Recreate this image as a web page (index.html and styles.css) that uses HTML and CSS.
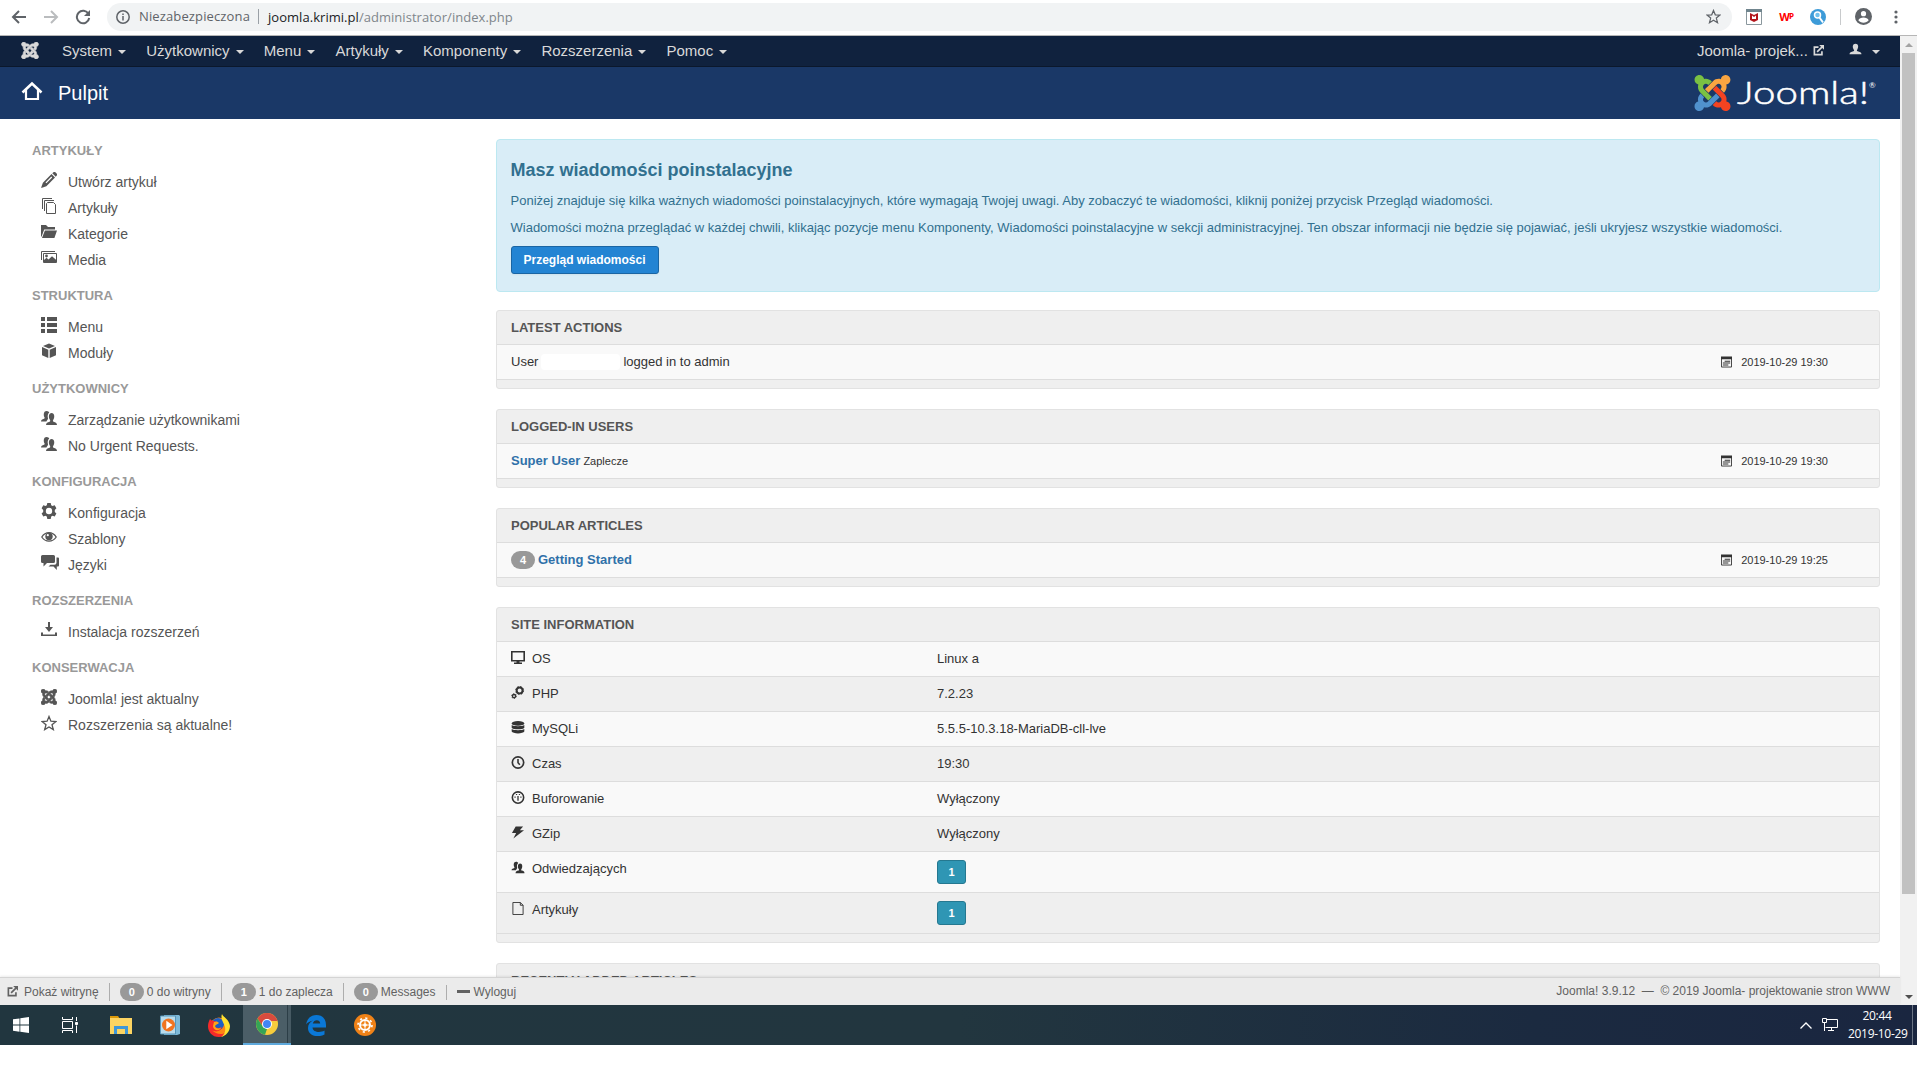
FILE: index.html
```html
<!DOCTYPE html>
<html lang="pl">
<head>
  <meta charset="UTF-8">
  <title>Pulpit - Joomla- projektowanie stron WWW - Administracja</title>
  <link rel="stylesheet" href="styles.css">
</head>
<body>
  <svg class="sprite" aria-hidden="true">
    <symbol id="i-joomla" viewBox="0 32 448 448"><path d="M.6 92.1C.6 58.8 27.4 32 60.4 32c30 0 54.5 21.9 59.2 50.2 32.6-7.6 67.1.6 96.5 30l-44.3 44.3c-20.5-20.5-42.6-16.3-55.4-3.5-14.3 14.3-14.3 37.9 0 52.2l99.5 99.5-44 44.3c-87.7-87.2-49.7-49.7-99.8-99.7-26.8-26.5-35-64.8-24.8-98.9C20.4 144.6.6 120.7.6 92.1zm129.5 116.4l44.3 44.3c10-10 89.7-89.7 99.7-99.8 14.3-14.3 37.6-14.3 51.9 0 12.8 12.8 17 35-3.5 55.4l44 44.3c31.2-31.2 38.5-67.6 28.9-101.2 29.2-4.1 51.9-29.2 51.9-59.5 0-33.2-26.8-60.1-59.8-60.1-30.3 0-55.4 22.5-59.5 51.6-33.8-9.9-71.7-1.5-98.3 25.1-18.3 19.1-71.1 71.5-99.6 99.9zm266.3 152.2c8.2-32.7-.9-68.5-26.3-93.9-11.8-12.2 5 4.7-99.5-99.7l-44.3 44.3 99.7 99.7c14.3 14.3 14.3 37.6 0 51.9-12.8 12.8-35 17-55.4-3.5l-44 44.3c27.6 30.2 68 38.8 102.7 28 5.5 27.4 29.7 48.1 58.9 48.1 33 0 59.8-26.8 59.8-60.1 0-30.2-22.5-55-51.6-59.1zm-84.3-53.1l-44-44.3c-87 86.4-50.4 50.4-99.7 99.8-14.3 14.3-37.6 14.3-51.9 0-13.1-13.4-16.9-35.3 3.2-55.4l-44-44.3c-30.2 30.2-38 65.2-29.5 98.3-26.7 6-46.2 29.9-46.2 58.2C0 453.2 26.8 480 59.8 480c28.6 0 52.5-19.8 58.6-46.7 32.7 8.2 68.5-.6 94.2-26 32.1-32 12.2-12.4 99.5-99.7z"/></symbol>
    <symbol id="i-pencil" viewBox="0 0 16 16"><path fill-rule="evenodd" d="M11.3 1.2 12.4.3a1.6 1.6 0 0 1 2.2.1l1 1a1.6 1.6 0 0 1 .1 2.2l-.9 1.1zM10.500 2l3.500 3.500-8.600 8.700L0 16l1.900-5.300zm-.2 2.600-5.800 5.800.9.900 5.800-5.800z"/></symbol>
    <symbol id="i-copy" viewBox="0 0 16 16"><g fill="none" stroke="currentColor"><path d="M6.500 4.500h6l2 2v9h-9v-10zM3.500 13V2.500h9.500M1.500 11V.5H11"/></g></symbol>
    <symbol id="i-folder" viewBox="0 0 16 16"><path d="M0 1h5l2 2h7v2.400H3.200L.8 12 0 13zM3.900 6.400H16L13.400 14H1z"/></symbol>
    <symbol id="i-pictures" viewBox="0 0 16 16"><path fill="none" stroke="currentColor" d="M.5 10V1.500H14M2.500 3.500h13v9h-13z"/><circle cx="5.500" cy="6" r="1.400"/><path d="M3 12V10l2.500-2.200 2 1.700 3.500-3.300 4 3.600V12z"/></symbol>
    <symbol id="i-list" viewBox="0 0 16 16"><path d="M0 0h4v4H0zM6 0h10v4H6zM0 6h4v4H0zM6 6h10v4H6zM0 12h4v4H0zM6 12h10v4H6z"/></symbol>
    <symbol id="i-cube" viewBox="0 0 16 16"><path d="m8 .5 6 2.400-6 2.600-6-2.600zM1 4l6.300 2.800V15L1 12.300zM15 4 8.700 6.800V15l6.300-2.700z"/></symbol>
    <symbol id="i-users" viewBox="0 0 16 16"><path d="M5.400 11.400H0c0-1.500 1.200-2.100 3-2.600.7-.3.900-.9.300-1.800C2.300 4.600 2.600.9 5.600.9c1.500 0 2.300.8 2.700 1.700-1.500 1.200-2 3.500-1.300 5.800.2.800-.9 1.700-1.600 3zM16 15H5c0-2 1.700-2.700 3.500-3.200.9-.3 1-1 .4-2C7.300 7.300 7.600 3 10.600 3s3.300 4.300 1.700 6.800c-.6 1-.5 1.700.4 2C14.400 12.300 16 13 16 15z"/></symbol>
    <symbol id="i-user" viewBox="0 0 16 16"><path d="M16 15H0c0-2.700 2.400-3.200 5.200-4 1.200-.4 1.200-1.300.4-2.500C3.600 5.500 4 1 8 1s4.400 4.500 2.400 7.500c-.8 1.200-.8 2.100.4 2.500 2.800.8 5.200 1.300 5.200 4z"/></symbol>
    <symbol id="i-cog" viewBox="0 0 16 16"><path fill-rule="evenodd" d="M6.300 0h3.400l.5 2.200 1.300.8 2.200-.7 1.700 2.900L13.800 7v2l1.600 1.600-1.700 2.900-2.200-.7-1.300.8-.5 2.400H6.300l-.5-2.400-1.300-.8-2.200.7-1.700-2.900L2.200 9V7L.6 5.200l1.700-2.900 2.200.7 1.300-.8zM8 4.800a3.200 3.200 0 1 0 0 6.400 3.200 3.200 0 0 0 0-6.400z"/></symbol>
    <symbol id="i-cogs" viewBox="1 0 15 16"><circle cx="10.500" cy="5.500" r="3.600" fill="none" stroke="currentColor" stroke-width="2.400"/><circle cx="10.500" cy="5.500" r="4.900" fill="none" stroke="currentColor" stroke-width="1.200" stroke-dasharray="2 1.850"/><circle cx="3.600" cy="12.400" r="2" fill="none" stroke="currentColor" stroke-width="1.700"/><circle cx="3.600" cy="12.400" r="3" fill="none" stroke="currentColor" stroke-width="1" stroke-dasharray="1.500 1.640"/></symbol>
    <symbol id="i-eye" viewBox="0 0 16 16"><path fill="none" stroke="currentColor" stroke-width="1.300" d="M.8 8C4.500 2.200 11.500 2.200 15.200 8 11.500 13.500 4.500 13.500.8 8z"/><circle cx="8" cy="7.500" r="3.700"/><circle cx="6.800" cy="6.200" r="1.100" fill="#fff"/></symbol>
    <symbol id="i-comments" viewBox="0 0 18 16"><path d="M1.500 0h11A1.500 1.500 0 0 1 14 1.500v5A1.500 1.500 0 0 1 12.500 8H6l-3.500 3.500V8h-1A1.500 1.500 0 0 1 0 6.500v-5A1.500 1.500 0 0 1 1.500 0z"/><path d="M15.500 2.500H17q1 0 1 1v7q0 1-1 1h-1.200V15l-3.300-3.500H7.500l2-1.700h4q2 0 2-2z"/></symbol>
    <symbol id="i-download" viewBox="0 0 16 16"><path d="M7 0h2v5h3L8 10 4 5h3zM0 10.500h2V12.500h12V10.500h2V14H0z"/></symbol>
    <symbol id="i-star" viewBox="0 0 16 16"><path fill="none" stroke="currentColor" stroke-width="1.300" d="m8 1.500 1.900 4.700 5 .3-3.900 3.200 1.300 4.900L8 11.900l-4.300 2.700L5 9.700 1.100 6.500l5-.3z"/></symbol>
    <symbol id="i-home" viewBox="0 0 22 20"><path fill="none" stroke="currentColor" stroke-width="2.600" d="m1.500 11.500 9.500-9 9.500 9"/><path fill="none" stroke="currentColor" stroke-width="2.200" d="M5 9v9h12V9"/></symbol>
    <symbol id="i-out" viewBox="0 0 16 16"><path fill="none" stroke="currentColor" stroke-width="2.400" d="M8 3H2v11h11V9M6 10l7-7"/><path d="M9 0h7v7z"/></symbol>
    <symbol id="i-calendar" viewBox="0 0 12 12"><path fill="none" stroke="currentColor" d="M.5 1.500h11v10H.5z"/><path d="M0 0h12v3H0zM4 4.500h6v1.200H4zM2 6.500h8v1.200H2zM2 8.700h6v1.200H2z"/></symbol>
    <symbol id="i-screen" viewBox="0 0 14 13"><path fill="none" stroke="currentColor" stroke-width="1.600" d="M.8.800h12.400v8.900H.8z"/><path d="M5.500 10h3v1.500H11V13H3v-1.500h2.500z"/></symbol>
    <symbol id="i-database" viewBox="0 0 14 14"><ellipse cx="7" cy="2.600" rx="6.800" ry="2.500"/><path d="M.2 4.400c2 1.700 11.600 1.700 13.600 0v2.800c-1 2.300-12.600 2.300-13.600 0zM.2 8.600c2 1.700 11.600 1.700 13.600 0v2.800c-1 2.600-12.600 2.600-13.600 0z"/></symbol>
    <symbol id="i-clock" viewBox="0 0 14 14"><g fill="none" stroke="currentColor"><circle cx="7" cy="7" r="6.100" stroke-width="1.800"/><path stroke-width="1.700" d="M7 3.300V7.300L9 9.500"/></g></symbol>
    <symbol id="i-dash" viewBox="0 0 14 14"><circle cx="7" cy="7" r="6.100" fill="none" stroke="currentColor" stroke-width="1.700"/><path d="M6.300 5.500h1.400V10.500H6.300zM3.200 6h1.300v1.200H3.200zM9.500 6h1.300v1.200H9.500zM4.800 3.300h1.300v1.100H4.800zM7.900 3.300h1.300v1.100H7.900z"/></symbol>
    <symbol id="i-flash" viewBox="0 0 14 14"><path d="M4.500.500h8L9 4.500h4.500L2 13.500l3-6H.5z"/></symbol>
    <symbol id="i-file" viewBox="0 0 14 14"><path fill="none" stroke="currentColor" d="M1.500.500h8l3 3v10h-11zM9.500.500v3h3"/></symbol>
  </svg>

  <div class="screen">
    <!-- browser toolbar -->
    <div class="toolbar">
      <svg class="nav-btn" viewBox="0 0 16 16"><path d="M15 8H2M8 2 2 8l6 6"/></svg>
      <svg class="nav-btn disabled" viewBox="0 0 16 16"><path d="M1 8h13M8 2l6 6-6 6"/></svg>
      <svg class="nav-btn" viewBox="0 0 16 16"><path d="M13.500 5A6.200 6.200 0 1 0 14.200 9"/><path class="solid" d="M15 1v6H9z"/></svg>
      <div class="address">
        <svg class="info" viewBox="0 0 14 14"><circle cx="7" cy="7" r="6.200"/><path d="M7 6v4.500M7 3.400v1.500"/></svg>
        <span class="insecure">Niezabezpieczona</span>
        <span class="url"><b>joomla.krimi.pl</b>/administrator/index.php</span>
        <svg class="fav" viewBox="0 0 16 16"><use href="#i-star"/></svg>
      </div>
      <div class="extensions">
        <svg width="16" height="16" viewBox="0 0 16 16"><path fill="#fff" stroke="#8a979d" d="M.5.500h15v15H.5z"/><path fill="#70858e" d="M0 0h16v3H0z"/><path fill="#b3151b" d="m4 4 4 2 4-2v7l-4 2-4-2z"/><path fill="#fff" d="M6 6.500 8 8l2-1.500V10H6z"/></svg>
        <span class="wp">W<small>P</small></span>
        <svg width="16" height="16" viewBox="0 0 16 16"><circle cx="8" cy="8" r="8" fill="#3d9bd8"/><circle cx="7.500" cy="6" r="3" fill="#6fc0ec" stroke="#fff" stroke-width="1.500"/><path stroke="#fff" stroke-width="2" d="m9.500 8.500 3.500 5"/></svg>
        <i class="bar"></i>
        <svg width="17" height="17" viewBox="0 0 17 17"><circle cx="8.500" cy="8.500" r="8.500" fill="#5f6368"/><circle cx="8.500" cy="5.700" r="2.600" fill="#fff"/><path fill="#fff" d="M3.300 12.200c1.400-3.600 9-3.600 10.400 0-2.200 3.300-8.200 3.300-10.400 0z"/></svg>
        <svg width="4" height="14" viewBox="0 0 4 14" fill="#5f6368"><circle cx="2" cy="2" r="1.600"/><circle cx="2" cy="7" r="1.600"/><circle cx="2" cy="12" r="1.600"/></svg>
      </div>
    </div>

    <div class="viewport">
      <div class="page">
        <nav class="navbar">
          <svg class="brand"><use href="#i-joomla"/></svg>
          <a>System</a><a>Użytkownicy</a><a>Menu</a><a>Artykuły</a><a>Komponenty</a><a>Rozszerzenia</a><a>Pomoc</a>
          <span class="site">Joomla- projek... <svg><use href="#i-out"/></svg></span>
          <a class="account"><svg><use href="#i-user"/></svg></a>
        </nav>

        <header class="header">
          <svg class="home"><use href="#i-home"/></svg>
          <h1>Pulpit</h1>
          <svg class="logo" viewBox="0 0 184 38">
            <svg x="0" y="1" width="37" height="36" viewBox="0 32 448 448">
              <path fill="#7ac143" d="M.6 92.100C.6 58.800 27.400 32 60.400 32c30 0 54.500 21.900 59.200 50.200 32.600-7.600 67.100.6 96.500 30l-44.300 44.300c-20.500-20.500-42.600-16.300-55.400-3.500-14.300 14.300-14.300 37.900 0 52.200l99.500 99.500-44 44.300c-87.700-87.200-49.700-49.700-99.800-99.700-26.800-26.500-35-64.800-24.800-98.900C20.400 144.600.6 120.700.6 92.100z"/>
              <path fill="#f9a541" d="M130.100 208.500l44.300 44.300c10-10 89.700-89.700 99.700-99.800 14.300-14.300 37.600-14.300 51.900 0 12.800 12.800 17 35-3.500 55.400l44 44.300c31.200-31.200 38.500-67.600 28.900-101.200 29.200-4.100 51.900-29.200 51.900-59.500 0-33.200-26.800-60.100-59.800-60.100-30.300 0-55.400 22.500-59.500 51.600-33.800-9.900-71.700-1.500-98.300 25.100-18.300 19.100-71.100 71.500-99.600 99.900z"/>
              <path fill="#f44321" d="M396.400 360.700c8.200-32.700-.9-68.500-26.300-93.900-11.800-12.200 5 4.700-99.500-99.700l-44.300 44.300 99.700 99.700c14.300 14.300 14.300 37.600 0 51.900-12.800 12.800-35 17-55.400-3.500l-44 44.300c27.600 30.200 68 38.800 102.700 28 5.500 27.400 29.700 48.100 58.900 48.100 33 0 59.800-26.800 59.800-60.100 0-30.200-22.500-55-51.600-59.100z"/>
              <path fill="#5091cd" d="M312.100 307.600l-44-44.300c-87 86.400-50.400 50.400-99.700 99.800-14.300 14.300-37.600 14.300-51.900 0-13.100-13.400-16.900-35.300 3.200-55.400l-44-44.300c-30.200 30.200-38 65.200-29.500 98.300-26.700 6-46.200 29.900-46.200 58.200C0 453.200 26.800 480 59.800 480c28.600 0 52.500-19.800 58.600-46.700 32.700 8.200 68.500-.6 94.200-26 32.100-32 12.200-12.400 99.500-99.700z"/>
            </svg>
            <text class="wordmark" x="43" y="30" textLength="132" lengthAdjust="spacingAndGlyphs">Joomla!</text>
            <text class="reg" x="175" y="14">®</text>
          </svg>
        </header>

        <div class="content">
          <aside class="sidebar">
            <h2>Artykuły</h2>
            <ul>
              <li><svg><use href="#i-pencil"/></svg>Utwórz artykuł</li>
              <li><svg><use href="#i-copy"/></svg>Artykuły</li>
              <li><svg><use href="#i-folder"/></svg>Kategorie</li>
              <li><svg><use href="#i-pictures"/></svg>Media</li>
            </ul>
            <h2>Struktura</h2>
            <ul>
              <li><svg><use href="#i-list"/></svg>Menu</li>
              <li><svg><use href="#i-cube"/></svg>Moduły</li>
            </ul>
            <h2>Użytkownicy</h2>
            <ul>
              <li><svg><use href="#i-users"/></svg>Zarządzanie użytkownikami</li>
              <li><svg><use href="#i-users"/></svg>No Urgent Requests.</li>
            </ul>
            <h2>Konfiguracja</h2>
            <ul>
              <li><svg><use href="#i-cog"/></svg>Konfiguracja</li>
              <li><svg><use href="#i-eye"/></svg>Szablony</li>
              <li><svg class="wide"><use href="#i-comments"/></svg>Języki</li>
            </ul>
            <h2>Rozszerzenia</h2>
            <ul>
              <li><svg><use href="#i-download"/></svg>Instalacja rozszerzeń</li>
            </ul>
            <h2>Konserwacja</h2>
            <ul>
              <li><svg class="bold"><use href="#i-joomla"/></svg>Joomla! jest aktualny</li>
              <li><svg><use href="#i-star"/></svg>Rozszerzenia są aktualne!</li>
            </ul>
          </aside>

          <main class="main">
            <div class="alert">
              <h3>Masz wiadomości poinstalacyjne</h3>
              <p>Poniżej znajduje się kilka ważnych wiadomości poinstalacyjnych, które wymagają Twojej uwagi. Aby zobaczyć te wiadomości, kliknij poniżej przycisk Przegląd wiadomości.</p>
              <p>Wiadomości można przeglądać w każdej chwili, klikając pozycje menu Komponenty, Wiadomości poinstalacyjne w sekcji administracyjnej. Ten obszar informacji nie będzie się pojawiać, jeśli ukryjesz wszystkie wiadomości.</p>
              <button class="btn-primary">Przegląd wiadomości</button>
            </div>

            <section class="well">
              <h4>Latest Actions</h4>
              <div class="row"><span>User</span><span class="redacted"></span><span>logged in to admin</span><time><svg><use href="#i-calendar"/></svg>2019-10-29 19:30</time></div>
            </section>

            <section class="well">
              <h4>Logged-in Users</h4>
              <div class="row"><a>Super User</a><small>Zaplecze</small><time><svg><use href="#i-calendar"/></svg>2019-10-29 19:30</time></div>
            </section>

            <section class="well">
              <h4>Popular Articles</h4>
              <div class="row"><span class="badge">4</span><a>Getting Started</a><time><svg><use href="#i-calendar"/></svg>2019-10-29 19:25</time></div>
            </section>

            <section class="well info-table">
              <h4>Site Information</h4>
              <div class="row"><span class="label"><svg><use href="#i-screen"/></svg>OS</span><span>Linux a</span></div>
              <div class="row"><span class="label"><svg><use href="#i-cogs"/></svg>PHP</span><span>7.2.23</span></div>
              <div class="row"><span class="label"><svg><use href="#i-database"/></svg>MySQLi</span><span>5.5.5-10.3.18-MariaDB-cll-lve</span></div>
              <div class="row"><span class="label"><svg><use href="#i-clock"/></svg>Czas</span><span>19:30</span></div>
              <div class="row"><span class="label"><svg><use href="#i-dash"/></svg>Buforowanie</span><span>Wyłączony</span></div>
              <div class="row"><span class="label"><svg><use href="#i-flash"/></svg>GZip</span><span>Wyłączony</span></div>
              <div class="row tall"><span class="label"><svg><use href="#i-users"/></svg>Odwiedzających</span><button class="btn-info">1</button></div>
              <div class="row tall"><span class="label"><svg><use href="#i-file"/></svg>Artykuły</span><button class="btn-info">1</button></div>
            </section>

            <section class="well">
              <h4>Recently Added Articles</h4>
            </section>
          </main>
        </div>

        <footer class="status">
          <span><svg><use href="#i-out"/></svg>Pokaż witrynę</span>
          <span><i class="badge">0</i>0 do witryny</span>
          <span><i class="badge">1</i>1 do zaplecza</span>
          <span><i class="badge">0</i>Messages</span>
          <span><i class="minus"></i>Wyloguj</span>
          <span class="version">Joomla! 3.9.12 &nbsp;—&nbsp; © 2019 Joomla- projektowanie stron WWW</span>
        </footer>
      </div>

      <div class="scrollbar">
        <i class="up"></i>
        <div class="thumb"></div>
        <i class="down"></i>
      </div>
    </div>

    <!-- Windows taskbar -->
    <div class="taskbar">
      <div class="task start"><svg width="16" height="16" viewBox="0 0 16 16" fill="#fff"><path d="M0 2.300 6.500 1.400v6.100H0zM7.300 1.200 16 0v7.500H7.300zM0 8.500h6.500v6.200L0 13.800zM7.300 8.500H16V16l-8.700-1.200z"/></svg></div>
      <div class="task view"><svg width="16" height="16" viewBox="0 0 16 16" fill="none" stroke="#fff"><path d="M.5 0v2.500h10V0M.5 4.500h10v7H.5zM.5 16v-2.500h10V16M14.500 0v4M14.500 8.500V16"/><path fill="#fff" d="M13.500 5.500h2v2h-2z"/></svg></div>
      <div class="task"><svg width="22" height="18" viewBox="0 0 22 18"><path fill="#dc9a0a" d="M0 0h8l2 3H0z"/><path fill="#fcd462" d="M0 2h22v16H0z"/><path fill="#3f97d8" d="M4 10h14v8h-3v-5H7v5H4z"/></svg></div>
      <div class="task"><svg width="20" height="20" viewBox="0 0 20 20"><path fill="#7db9d8" d="M4 0h15l1 1v18l-3 1H4z"/><path fill="#b9dcec" stroke="#5797bb" d="M.5 1h15v18H.5z"/><circle cx="8.500" cy="10" r="6.500" fill="#f07420"/><path fill="#fff" d="m6.300 5.800 6.200 4.200-6.200 4.200z"/></svg></div>
      <div class="task"><svg width="22" height="23" viewBox="0 0 22 23"><circle cx="11" cy="12.500" r="9" fill="#ff8413"/><circle cx="10" cy="10" r="6" fill="#1d5fc4"/><path fill="#f52a2a" d="M2 5c1 1 2 2 4 2l3 1c-1 2-2 2-3 3 1 3 5 4 8 2-1 4-6 6-10 3 4 5 11 5 15 2-2 3-5 5-8 5C4 23 0 18 0 12c0-3 1-5 2-7z"/><path fill="#ffa416" d="M6 8c2-1 4-.5 5 1-1 1.500-3 1-4 3 1 3 4 3 6 1.500-1 4-8 3.500-8-1.500z"/><path fill="#ffe02e" d="M14 0c1 3 7 5 8 12 0 5-4 10-9 11 3-2 5-5 4-10-1-4-5-8-3-13z"/></svg></div>
      <div class="task active"><svg width="22" height="22" viewBox="0 0 22 22"><circle cx="11" cy="11" r="11" fill="#f7cc3c"/><path fill="#d94b3e" d="M1.500 5.500a11 11 0 0 1 19 0L21.500 8H11l-4.500 5z"/><path fill="#35a556" d="M1.500 5.500 6.700 13.500 11 16l-2 5.800A11 11 0 0 1 1.500 5.500z"/><circle cx="11" cy="11" r="5" fill="#fff"/><circle cx="11" cy="11" r="4" fill="#4285f4"/></svg></div>
      <div class="task"><svg width="20" height="21" viewBox="0 0 20 21"><path fill="#0a78d7" fill-rule="evenodd" d="M0 9.500C1 3.500 5 0 10.500 0 16.500 0 20 4 20 10v2.500H6.500c.3 5 8 5.500 12 3v4C12 23 2 21 2 13c0-3.500 2-6 5-7.500C3.500 6 1 8 0 9.500zM6.800 8.500h7.400c0-4.500-6.600-4.500-7.400 0z"/></svg></div>
      <div class="task"><svg width="22" height="22" viewBox="0 0 22 22"><circle cx="11" cy="11" r="11" fill="#f08217"/><g fill="none" stroke="#fff"><circle cx="11" cy="11" r="5" stroke-width="2"/><circle cx="11" cy="11" r="7" stroke-width="1.600" stroke-dasharray="2.200 3.300"/><path d="M6 11h10M11 6v10"/></g><circle cx="11" cy="11" r="1.800" fill="#fff"/></svg></div>
      <div class="tray">
        <svg width="12" height="7" viewBox="0 0 12 7" fill="none" stroke="#fff" stroke-width="1.300"><path d="M.5 6.500 6 1l5.500 5.500"/></svg>
        <svg width="16" height="14" viewBox="0 0 16 14" fill="none" stroke="#fff"><path d="M5 1.500h10.500v8H3.500M.5.500h4v4h-4zM2.500 4.500V13M9.500 10v2.500M6 12.500h6"/></svg>
        <div class="clock">20:44<br>2019-10-29</div>
      </div>
    </div>
  </div>
</body>
</html>
```
FILE: styles.css
```css
* {
  box-sizing: border-box;
}

body {
  margin: 0;
  background: #fff;
  font-family: "Liberation Sans", Arial, sans-serif;
  font-size: 13px;
  line-height: 18px;
  color: #333;
  fill: currentColor;
}

h1, h2, h3, h4, p, ul {
  margin: 0;
  padding: 0;
}

svg {
  flex-shrink: 0;
}

.sprite {
  display: none;
}

.screen {
  width: 1917px;
  height: 1045px;
  display: flex;
  flex-direction: column;
  overflow: hidden;
}

/* browser toolbar */
.toolbar {
  height: 36px;
  display: flex;
  align-items: center;
  padding: 0 19px 2px 11px;
  border-bottom: 1px solid #b6b6b6;
  font-family: "Open Sans", sans-serif;
}

.nav-btn {
  width: 16px;
  height: 16px;
  margin-right: 16px;
  fill: none;
  stroke: #5f6368;
  stroke-width: 2;
}

.nav-btn.disabled {
  stroke: #babcbe;
}

.nav-btn .solid {
  fill: #5f6368;
  stroke: none;
}

.address {
  flex: 1;
  height: 28px;
  margin-right: 14px;
  padding: 0 11px 0 9px;
  display: flex;
  align-items: center;
  border-radius: 14px;
  background: #f1f3f4;
  font-size: 13px;
}

.info {
  width: 14px;
  height: 14px;
  margin-right: 9px;
  fill: none;
  stroke: #5f6368;
  stroke-width: 1.5;
}

.insecure {
  padding-right: 8px;
  color: #5f6368;
  border-right: 1px solid #9aa0a6;
  line-height: 15px;
  letter-spacing: .13px;
}

.url {
  padding-left: 9px;
  color: #80868b;
  letter-spacing: .04px;
}

.url b {
  font-weight: normal;
  color: #202124;
}

.fav {
  width: 15px;
  height: 15px;
  margin-left: auto;
  color: #5f6368;
}

.extensions {
  display: flex;
  align-items: center;
}

.wp {
  margin: 0 17px;
  font: bold 11px/16px "Open Sans", sans-serif;
  letter-spacing: -1px;
  color: #f00;
}

.wp small {
  font-size: 8px;
  vertical-align: 2px;
}

.bar {
  width: 1px;
  height: 16px;
  margin: 0 14px;
  background: #c8cacc;
}

.extensions svg:last-child {
  margin-left: 22px;
}

/* page */
.viewport {
  height: 969px;
  display: flex;
}

.page {
  width: 1900px;
  display: flex;
  flex-direction: column;
}

.navbar {
  height: 31px;
  display: flex;
  align-items: center;
  padding: 0 20px 1px 21px;
  background: #10223e;
  border-bottom: 1px solid #0b182c;
  font-size: 15px;
  color: #d9d9d9;
}

.brand {
  width: 18px;
  height: 17px;
  margin-right: 23px;
  stroke: currentColor;
  stroke-width: 16;
}

.navbar a {
  display: flex;
  align-items: center;
  margin-right: 20.2px;
}

.navbar a::after {
  content: "";
  margin: 3px 0 0 6px;
  border: 4px solid transparent;
  border-top-color: currentColor;
  border-bottom: 0;
}

.site {
  margin-left: auto;
}

.site svg {
  width: 11px;
  height: 11px;
  margin-left: 1px;
}

.navbar .account {
  margin: 0 0 0 25px;
}

.account svg {
  width: 13px;
  height: 12px;
  margin-bottom: 3px;
}

.navbar .account::after {
  margin-left: 10px;
}

.header {
  height: 52px;
  display: flex;
  align-items: center;
  padding: 0 22px 0 21px;
  background: #1a3867;
  color: #fff;
}

.home {
  width: 22px;
  height: 20px;
  margin: 0 15px 4px 0;
}

.header h1 {
  font-size: 20px;
  font-weight: normal;
}

.logo {
  width: 184px;
  height: 38px;
  margin-left: auto;
}

.wordmark {
  font: 300 31px "Lato", sans-serif;
  stroke: currentColor;
  stroke-width: .5;
}

.reg {
  font: 8px "Lato", sans-serif;
}

.content {
  height: 858px;
  display: flex;
  overflow: hidden;
}

.sidebar {
  width: 496px;
  padding: 21px 0 0 32px;
}

.sidebar h2 {
  height: 20px;
  font-size: 13px;
  line-height: 22px;
  text-transform: uppercase;
  color: #999;
}

.sidebar ul {
  margin: 9px 0 12px;
  list-style: none;
}

.sidebar li {
  height: 26px;
  display: flex;
  align-items: center;
  padding-left: 9px;
  font-size: 14px;
  color: #555;
}

.sidebar li svg {
  width: 16px;
  height: 16px;
  margin: 0 11px 4px 0;
}

.sidebar li .wide {
  width: 18px;
  margin-right: 9px;
}

.sidebar li .bold {
  stroke: currentColor;
  stroke-width: 16;
}

.main {
  width: 1384px;
  padding-top: 20px;
}

.alert {
  height: 153px;
  margin-bottom: 18px;
  padding: 20px 14px 0 13.5px;
  background: #d9edf7;
  border: 1px solid #bce8f1;
  border-radius: 4px;
  color: #31708f;
  white-space: nowrap;
}

.alert h3 {
  margin-bottom: 12px;
  font-size: 18px;
  line-height: 20px;
}

.alert p {
  margin-bottom: 9px;
}

.btn-primary {
  display: block;
  width: 148px;
  height: 28px;
  padding: 0 0 1px;
  background: #2384d3;
  border: 1px solid #1a65a3;
  border-radius: 3px;
  box-shadow: 0 1px 2px rgba(0,0,0,.05);
  font: bold 12px "Liberation Sans", Arial, sans-serif;
  color: #fff;
}

.well {
  margin-bottom: 20px;
  padding-bottom: 8px;
  background: #efefef;
  border: 1px solid #e2e2e2;
  border-radius: 3px;
}

.well h4 {
  height: 33px;
  padding-left: 14px;
  font-size: 13px;
  line-height: 34px;
  text-transform: uppercase;
  color: #555;
}

.row {
  height: 35px;
  display: flex;
  align-items: center;
  padding: 0 51px 0 14px;
  background: #f9f9f9;
  border-top: 1px solid #ddd;
}

.row:last-child {
  height: 36px;
  border-bottom: 1px solid #ddd;
}

.row a {
  font-weight: bold;
  color: #3071a9;
}

.row small {
  margin: 0 0 0 3px;
  font-size: 11px;
}

.row time {
  display: flex;
  align-items: center;
  margin-left: auto;
  font-size: 11px;
}

.row time svg {
  width: 11px;
  height: 12px;
  margin: 0 9px 1px 0;
}

.redacted {
  width: 79px;
  height: 16px;
  margin: 0 3px;
  border-radius: 4px;
  background: #fff;
}

.badge {
  width: 24px;
  height: 18px;
  margin-right: 3px;
  border-radius: 9px;
  background: #999;
  font: bold 11px/18px "Liberation Sans", Arial, sans-serif;
  text-align: center;
  color: #fff;
}

.label {
  width: 426px;
  display: flex;
  align-items: center;
}

.label svg {
  width: 14px;
  height: 13px;
  margin: 0 7px 3px 0;
}

.info-table .row:nth-child(odd) {
  background: #efefef;
}

.info-table .tall {
  height: 41px;
}

.info-table .tall:last-child {
  height: 42px;
}

.tall .label {
  height: 34px;
  align-self: flex-start;
}

.btn-info {
  width: 29px;
  height: 24px;
  padding: 0 0 1px;
  background: #2f96b4;
  border: 1px solid #257890;
  border-radius: 3px;
  font: bold 11px "Liberation Sans", Arial, sans-serif;
  color: #fff;
}

.status {
  z-index: 1;
  height: 28px;
  display: flex;
  align-items: center;
  padding: 1px 10px 0 7px;
  background: #ebebeb;
  border-top: 1px solid #d4d4d4;
  box-shadow: 0 -1px 2px rgba(0,0,0,.08);
  font-size: 12px;
  line-height: 15px;
  color: #626262;
}

.status span {
  display: flex;
  align-items: center;
  padding-right: 10.5px;
}

.status span + span {
  padding-left: 9.5px;
  border-left: 1px solid #adadad;
}

.status svg {
  width: 11px;
  height: 11px;
  margin: 0 6px 2px 0;
}

.minus {
  width: 13px;
  height: 3px;
  margin: 0 4px 2px 0;
  background: #626262;
}

.status .version {
  margin: 0 0 2px auto;
  padding: 0;
  border: 0;
}

/* scrollbar */
.scrollbar {
  width: 17px;
  display: flex;
  flex-direction: column;
  align-items: center;
  background: #f1f1f1;
}

.scrollbar i {
  height: 17px;
  display: flex;
  align-items: center;
}

.scrollbar i::before {
  content: "";
  border: 4px solid transparent;
}

.scrollbar .up::before {
  border-top: 0;
  border-bottom-color: #a3a3a3;
}

.thumb {
  width: 13px;
  height: 841px;
  background: #c1c1c1;
}

.scrollbar .down {
  margin-top: auto;
}

.scrollbar .down::before {
  border-bottom: 0;
  border-top-color: #505050;
}

/* Windows taskbar */
.taskbar {
  height: 40px;
  display: flex;
  background: linear-gradient(90deg, #21363f 0%, #22363f 50%, #1b2a40 80%, #1a2640 100%);
}

.task {
  width: 49px;
  display: flex;
  align-items: center;
  justify-content: center;
}

.task.start {
  width: 45px;
  padding-right: 3px;
}

.task.view {
  padding-right: 2px;
  width: 51px;
}

.task.active {
  width: 48px;
  background: linear-gradient(90deg, #4b5e67 44px, #2c3e47 44px, #2c3e47 45px, #475a63 45px);
  border-bottom: 2px solid #5ea9dc;
}

.tray {
  margin-left: auto;
  display: flex;
  align-items: center;
  width: 117px;
  color: #fff;
}

.tray svg:nth-child(2) {
  margin: 0 10px;
}

.clock {
  width: 65px;
  height: 40px;
  padding: 2px 6px 0 0;
  border-right: 1px solid #6b7484;
  font: 12px/18px "Open Sans", sans-serif;
  letter-spacing: -.3px;
  text-align: center;
  white-space: nowrap;
}
```
